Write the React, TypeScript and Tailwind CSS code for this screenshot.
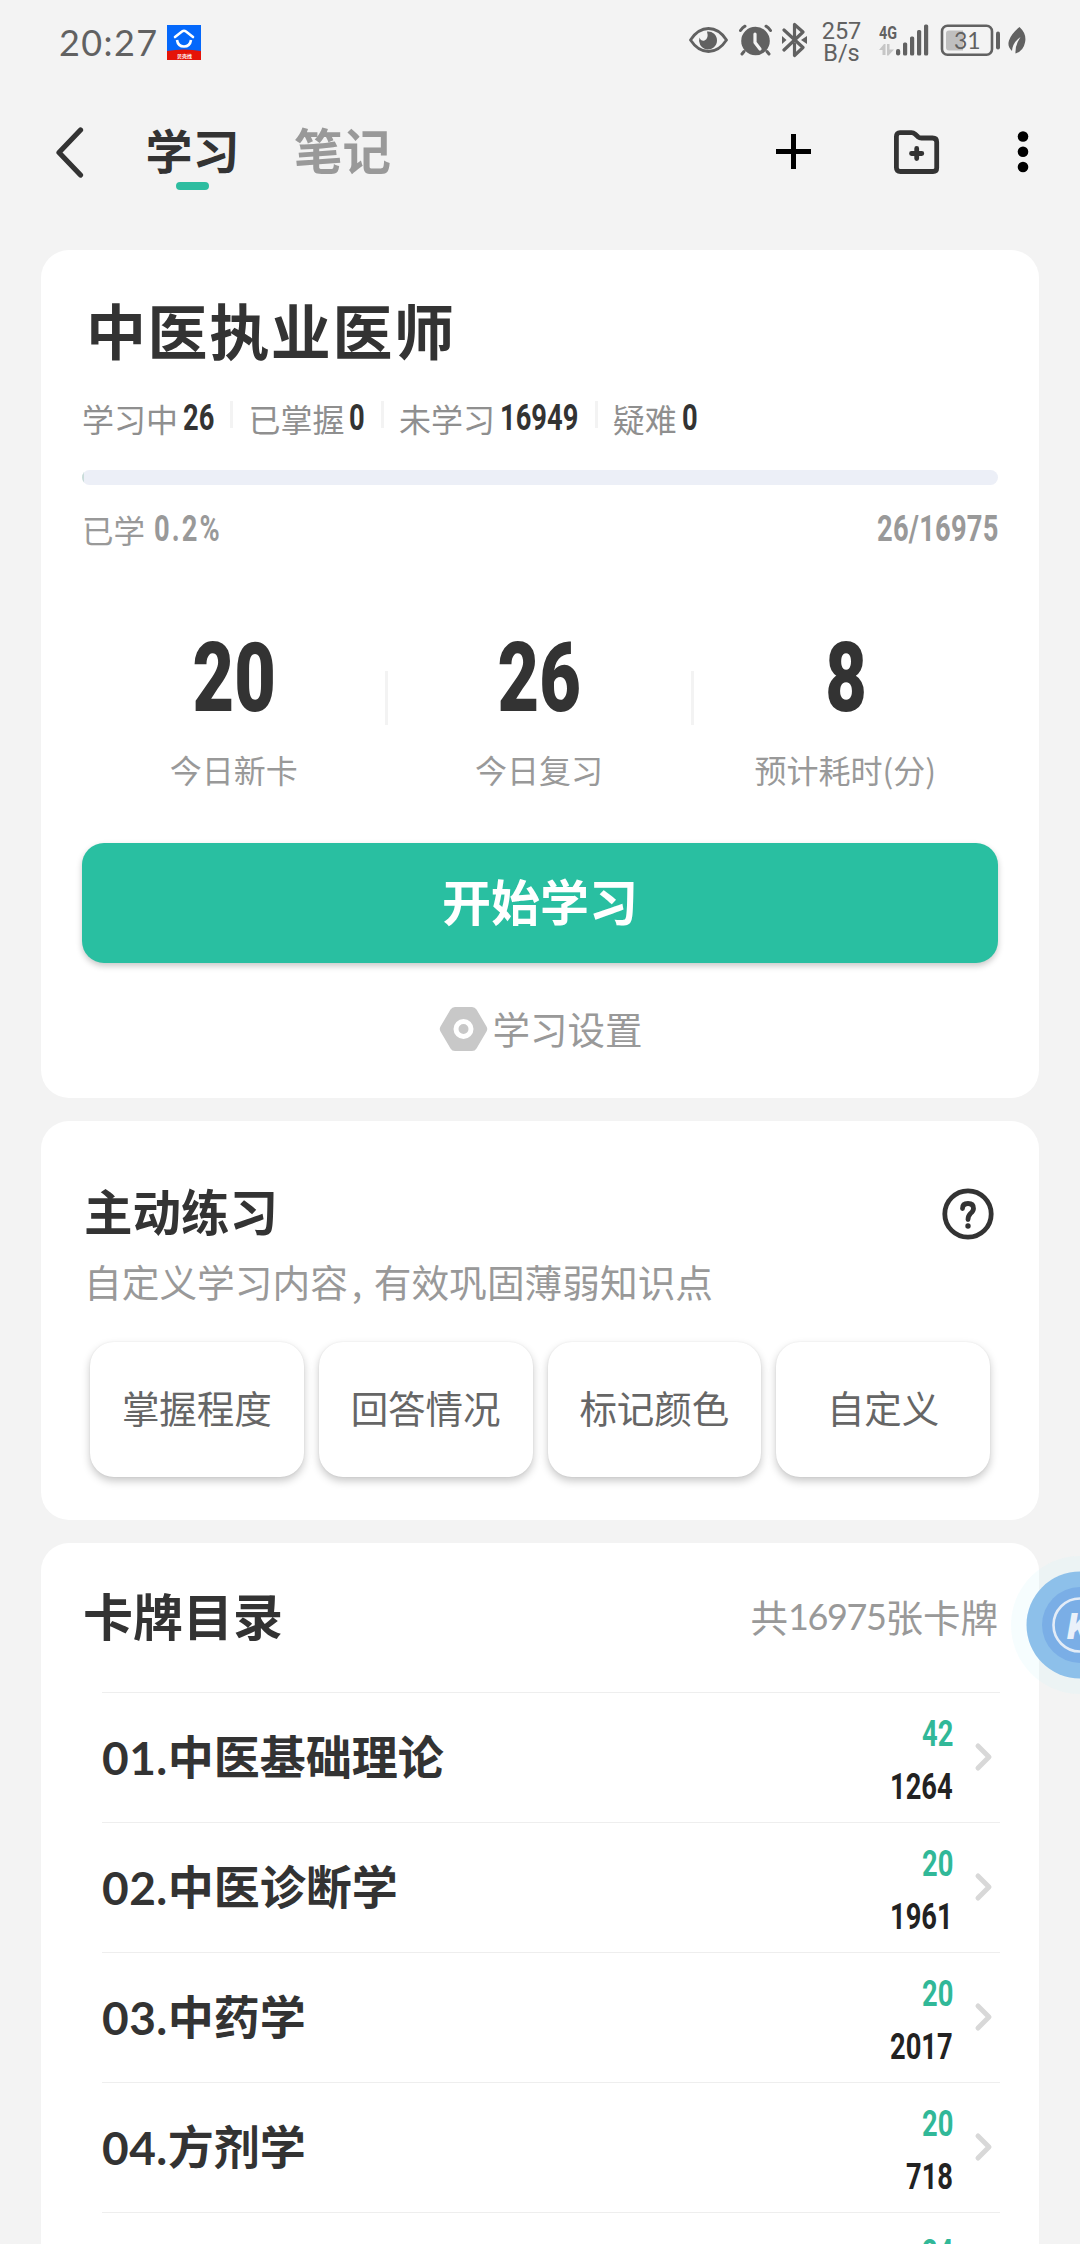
import type { ReactNode } from 'react';

const stats = [
  { label: '学习中', value: '26' },
  { label: '已掌握', value: '0' },
  { label: '未学习', value: '16949' },
  { label: '疑难', value: '0' },
];

const today = [
  { label: '今日新卡', value: '20' },
  { label: '今日复习', value: '26' },
  { label: '预计耗时(分)', value: '8' },
];

const practice = ['掌握程度', '回答情况', '标记颜色', '自定义'];

const chapters = [
  { no: '01.', title: '中医基础理论', due: '42', total: '1264' },
  { no: '02.', title: '中医诊断学', due: '20', total: '1961' },
  { no: '03.', title: '中药学', due: '20', total: '2017' },
  { no: '04.', title: '方剂学', due: '20', total: '718' },
];

/* Condensed number; the box takes the narrowed width so neighbours line up */
function Num({ value, className = '' }: { value: string; className?: string }) {
  const width = [...value].reduce((sum, c) => sum + (c === '/' ? 11 : c === '.' ? 9 : c === '%' ? 29 : 15.7), 0);
  return (
    <span className={`inline-block h-10 whitespace-nowrap font-['Roboto',sans-serif] text-[36.5px] leading-10 font-bold ${className}`} style={{ width }}>
      <span className="inline-block origin-left scale-x-[0.748]">{value}</span>
    </span>
  );
}

function Card({ className = '', children }: { className?: string; children: ReactNode }) {
  return <section className={`mx-[41px] rounded-[28px] bg-white px-[41px] ${className}`}>{children}</section>;
}

function StatusBar() {
  return (
    <div className="flex h-[84px] items-start text-[#616161]">
      <span className="mt-[22px] ml-[59px] w-[108px] font-['Lato',sans-serif] text-[36px] leading-[40px] tracking-[1.400px]">20:27</span>
      <svg className="mt-[25px] h-[35px] w-[34px]" viewBox="0 0 34 35" fill="none">
        <rect width="34" height="35" fill="#0468fb" />
        <path d="M0 26Q17 23 34 26V35H0Z" fill="#e51408" />
        <path d="M8 12L15 6.500Q17 5 19 6.500L26 12" stroke="#fff" strokeWidth="2.600" strokeLinecap="round" />
        <path d="M10 15Q11 21.500 17 21.500T24 15" stroke="#fff" strokeWidth="2.600" />
        <text x="10" y="32.500" fontSize="5" fontWeight="700" fill="#fff" fontFamily="Noto Sans CJK SC, sans-serif">
          贝壳找
        </text>
      </svg>

      {/* eye */}
      <svg className="mt-[26px] ml-[488px] h-7 w-[39px]" viewBox="0 0 39 28" fill="none">
        <path d="M1.500 14Q9 2.500 19.500 2.500T37.500 14Q30 25.500 19.500 25.500T1.500 14Z" stroke="currentColor" strokeWidth="2.800" strokeLinejoin="round" />
        <path d="M18 5.500A9 9 0 1 1 10.500 11.500Q12 15.500 15.500 14.500Q20 12.500 18 5.500Z" fill="currentColor" />
      </svg>
      {/* alarm */}
      <svg className="mt-6 ml-[11px] h-8 w-[33px]" viewBox="0 0 33 32" fill="none" stroke="currentColor" strokeLinecap="round">
        <circle cx="16.500" cy="17" r="14.300" fill="currentColor" stroke="none" />
        <path d="M1.500 6.500Q3.500 3.500 6 2.200M31.500 6.500Q29.500 3.500 27 2.200M5 27.500L3 30M28 27.500L30 30" strokeWidth="3" />
        <path d="M16 10V18.500L21 25" stroke="#f3f3f3" strokeWidth="3.200" strokeLinejoin="round" />
      </svg>
      {/* bluetooth */}
      <svg className="mt-[22px] ml-[10px] h-9 w-[25px]" viewBox="0 0 25 36" fill="none">
        <path d="M2 8L21 25.500L12.500 33.500V22M2 28L21 10L12.500 2.500V14" stroke="currentColor" strokeWidth="3.200" strokeLinejoin="round" strokeLinecap="round" />
        <path d="M0 14L4.500 18L0 22ZM25 14L19 18L25 22Z" fill="currentColor" />
      </svg>
      <span className="mt-5 ml-[14px] flex w-[41px] flex-col items-center font-['Roboto',sans-serif] text-[23.500px] leading-[22px]">
        <span>257</span>
        <span>B/s</span>
      </span>
      {/* signal */}
      <svg className="mt-5 ml-[17px] h-[38px] w-[51px]" viewBox="0 -4 51 38" fill="currentColor">
        <text x="0" y="14.500" fontSize="18.500" fontWeight="700" fontFamily="Roboto, sans-serif" textLength="18" lengthAdjust="spacingAndGlyphs">
          4G
        </text>
        <path d="M0 26L5 20H6.500V31H3.500V26ZM8 20H10.500V25.500H15L9.500 31.500H8Z" fill="#c6c6c6" />
        <rect x="17" y="25" width="4.200" height="6.500" rx="2" />
        <rect x="24" y="18.500" width="4.200" height="13" rx="1.500" />
        <rect x="31" y="12.500" width="4.200" height="19" rx="1.500" />
        <rect x="38" y="6" width="4.200" height="25.500" rx="1.500" />
        <rect x="45" y="0.600" width="4.200" height="31" rx="1.500" />
      </svg>
      {/* battery */}
      <svg className="mt-6 ml-[10px] h-[33px] w-[60px]" viewBox="0 0 60 33" fill="none">
        <rect x="2" y="1.800" width="50" height="29" rx="5.500" stroke="currentColor" strokeWidth="2.600" />
        <path d="M9 6.500H23V26.500H9Q6 26.500 6 23.500V9.500Q6 6.500 9 6.500Z" fill="#bfbfbf" />
        <rect x="56" y="7.500" width="4" height="18" rx="2" fill="currentColor" />
        <text x="14" y="24.800" fontSize="23" fontFamily="Lato, sans-serif" fill="currentColor">
          31
        </text>
      </svg>
      {/* leaf */}
      <svg className="mt-[27px] ml-[8px] h-7 w-[18px]" viewBox="0 0 18 28" fill="currentColor">
        <path d="M11.500 0Q19 7 17 15.500Q15.500 24 7.500 26.500Q7 18 12.500 10Q4.500 15.500 4 24Q-1 19.500 1 13.500Q3 7 11.500 0Z" />
      </svg>
    </div>
  );
}

function TopBar() {
  return (
    <header className="flex h-[166px] items-start font-['Noto_Sans_CJK_SC',sans-serif] font-bold">
      <svg className="mt-[43px] ml-[54px] h-[52px] w-[31px]" viewBox="0 0 31 52" fill="none">
        <path d="M26.500 3L5 25.500L26.500 48" stroke="#333" strokeWidth="5.200" strokeLinecap="round" strokeLinejoin="round" />
      </svg>
      <div className="mt-[33px] ml-[60px] flex w-[95px] flex-col items-center">
        <span className="text-[47px] leading-[64px] text-[#333]">学习</span>
        <span className="mt-px h-2 w-[33px] rounded-full bg-[#2dbda0]" />
      </div>
      <span className="mt-[33px] ml-[54px] w-[98px] text-[48.500px] leading-[64px] text-[#999]">笔记</span>
      <svg className="mt-[50px] ml-[384px] h-[35px] w-[35px]" viewBox="0 0 35 35">
        <path d="M15 0H20V15H35V20H20V35H15V20H0V15H15Z" />
      </svg>
      <svg className="mt-[45px] ml-[82px] h-[46px] w-[48px]" viewBox="0 0 48 46" fill="none" stroke="#333" strokeWidth="4.800" strokeLinejoin="round" strokeLinecap="round">
        <path d="M7 3.700H18.500Q20.500 3.700 22 5L25 7.800Q26.500 9 28.500 9H39.500Q43.700 9 43.700 13V39Q43.700 42.500 40 42.500H7.500Q3.400 42.500 3.400 38.500V7.500Q3.400 3.700 7 3.700Z" />
        <path d="M23.700 19.500V29.500M18.500 24.500H28.800" />
      </svg>
      <svg className="mt-[47px] ml-[76px] h-[42px] w-[12px]" viewBox="0 0 12 42">
        <circle cx="6" cy="5.500" r="5.300" />
        <circle cx="6" cy="20.700" r="5.300" />
        <circle cx="6" cy="36" r="5.300" />
      </svg>
    </header>
  );
}

function StudyCard() {
  return (
    <Card className="h-[848px] pt-[39px]">
      <h1 className="pl-[4px] text-[60px] leading-[80px] font-bold tracking-[1.600px] text-[#333]">中医执业医师</h1>

      <div className="mt-[29px] flex h-10 items-center">
        {stats.map((s, i) => (
          <div key={s.label} className="flex h-10 items-center">
            {i > 0 && <span className="mr-[15px] mb-[7px] ml-[16px] h-[27px] w-[3px] bg-[#f3f3f3]" />}
            <span className="text-[32px] leading-10 text-[#8f8f8f]">{s.label}</span>
            <Num value={s.value} className="ml-[5px] text-[#333]" />
          </div>
        ))}
      </div>

      <div className="mt-8 h-[15px] overflow-hidden rounded-full bg-[#eceff7]">
        <div className="h-full w-[2px] bg-[#c9dcd9]" />
      </div>

      <div className="mt-6 flex h-10 items-center justify-between text-[#999]">
        <div className="flex items-center">
          <span className="mr-[9px] text-[31.500px] leading-10">已学</span>
          <Num value="0.2%" className="tracking-[2.800px]" />
        </div>
        <Num value="26/16975" className="tracking-[0.300px]" />
      </div>

      <div className="mt-[81px] grid h-40 grid-cols-3">
        {today.map((t, i) => (
          <div key={t.label} className="flex">
            <div className="flex flex-1 flex-col items-center">
              <span className="ml-px scale-x-[0.74] font-['Roboto',sans-serif] text-[97px] leading-[96px] font-black text-[#333]">{t.value}</span>
              <span className="mt-[23px] text-[32px] leading-10 text-[#999]">{t.label}</span>
            </div>
            {i < 2 && <span className="mt-[41px] -mr-px h-[54px] w-[3px] bg-[#f3f3f3]" />}
          </div>
        ))}
      </div>

      <button className="mt-[53px] h-[120px] w-full rounded-[22px] bg-[#29bfa1] pb-[6px] text-[49px] font-bold text-white shadow-[0_3px_6px_rgba(0,0,0,0.22)]">
        开始学习
      </button>

      <div className="mt-[41px] flex h-[50px] items-center justify-center text-[37.500px] leading-[50px] text-[#999]">
        <svg className="mr-1 h-[46px] w-[49px]" viewBox="0 0 49 46">
          <path d="M16 1H33Q36 1 37.500 3.500L47.500 20.500Q49 23 47.500 25.500L37.500 42.500Q36 45 33 45H16Q13 45 11.500 42.500L1.500 25.500Q0 23 1.500 20.500L11.500 3.500Q13 1 16 1Z" fill="#c8c8c8" />
          <circle cx="24.500" cy="23" r="7.500" fill="none" stroke="#fff" strokeWidth="5" />
        </svg>
        <span className="-mr-px pb-[2px] pl-px">学习设置</span>
      </div>
    </Card>
  );
}

function PracticeCard() {
  return (
    <Card className="mt-[23px] h-[399px] pt-[59px]">
      <div className="flex h-[60px] items-center justify-between pr-[4px] pl-[2px]">
        <h2 className="text-[48.500px] leading-[60px] font-bold text-[#333]">主动练习</h2>
        <svg className="mt-[7px] h-[52px] w-[52px]" viewBox="0 0 52 52" fill="none" stroke="#333">
          <circle cx="26" cy="26" r="23.200" strokeWidth="4.800" />
          <path d="M20.500 20.500Q20.500 15.500 26 15.500T31.500 20.500Q31.500 23 28.500 25.500Q26 28 26 31.500" strokeWidth="4.800" strokeLinecap="round" />
          <circle cx="26" cy="38" r="2.700" fill="#333" stroke="none" />
        </svg>
      </div>
      <p className="mt-4 flex pl-[2px] text-[37.700px] leading-[50px] text-[#999]">
        <span>自定义学习内容</span>
        <span className="w-[26px] pl-[4px]">,</span>
        <span>有效巩固薄弱知识点</span>
      </p>
      <div className="mt-[36px] flex gap-[15px] px-2">
        {practice.map((p) => (
          <button key={p} className="h-[135px] flex-1 rounded-[24px] bg-white pb-1 text-[37.500px] text-[#666] shadow-[0_4px_8px_rgba(0,0,0,0.22),0_0_2px_rgba(0,0,0,0.07)]">
            {p}
          </button>
        ))}
      </div>
    </Card>
  );
}

function CatalogCard() {
  return (
    <Card className="mt-[23px] h-[760px] pt-[41px]">
      <div className="flex h-[60px] items-center justify-between pl-[1px]">
        <h2 className="text-[50px] leading-[60px] font-bold text-[#333]">卡牌目录</h2>
        <span className="mt-1 flex text-[37.500px] leading-[60px] text-[#999]">
          共<span className="font-['Lato',sans-serif] text-[36px] tracking-[-1.400px]">16975</span>张卡牌
        </span>
      </div>
      <ul className="mt-12 ml-5 w-[898px]">
        {chapters.map((c) => (
          <li key={c.no} className="flex h-[130px] items-center border-t border-[#eeeeee]">
            <span className="font-['Lato',sans-serif] text-[46px] leading-[60px] font-bold tracking-[0.500px] text-[#333]">{c.no}</span>
            <span className="flex-1 pb-[7px] text-[46px] leading-[60px] font-bold text-[#333]">{c.title}</span>
            <span className="mt-[6px] flex flex-col items-end gap-[13px]">
              <Num value={c.due} className="text-[#31b898]" />
              <Num value={c.total} className="text-[#222]" />
            </span>
            <svg className="mr-[7px] mb-px ml-[21px] h-[30px] w-[19px]" viewBox="0 0 19 30" fill="none">
              <path d="M4 4L15 15L4 26" stroke="#d8d8d8" strokeWidth="5" strokeLinecap="round" strokeLinejoin="round" />
            </svg>
          </li>
        ))}
        {/* next row, only its top edge is on screen */}
        <li className="flex justify-end border-t border-[#eeeeee] pt-[20px] pr-[47px]">
          <Num value="24" className="text-[#31b898]" />
        </li>
      </ul>
    </Card>
  );
}

/* Floating bubble docked against the right screen edge */
function FloatingBall() {
  return (
    <svg className="absolute top-[1554px] right-0 h-[142px] w-[70px]" viewBox="0 0 70 142">
      <circle cx="70" cy="71" r="69" fill="#d0f6fa" fillOpacity="0.2" />
      <circle cx="70" cy="71" r="53.500" fill="#8dc0ea" />
      <circle cx="70" cy="71" r="38" fill="#7aaee6" />
      <circle cx="70" cy="71" r="26.500" fill="none" stroke="#e3ecf7" strokeWidth="2.600" />
      <text x="57" y="84.500" fontSize="37" fontWeight="900" fontStyle="italic" fontFamily="Roboto, sans-serif" fill="#eaf1fa">
        K
      </text>
    </svg>
  );
}

export default function App() {
  return (
    <main className="relative h-[2244px] w-[1080px] overflow-hidden bg-[#f3f3f3] font-['Noto_Sans_CJK_SC',sans-serif]">
      <StatusBar />
      <TopBar />
      <StudyCard />
      <PracticeCard />
      <CatalogCard />
      <FloatingBall />
    </main>
  );
}
